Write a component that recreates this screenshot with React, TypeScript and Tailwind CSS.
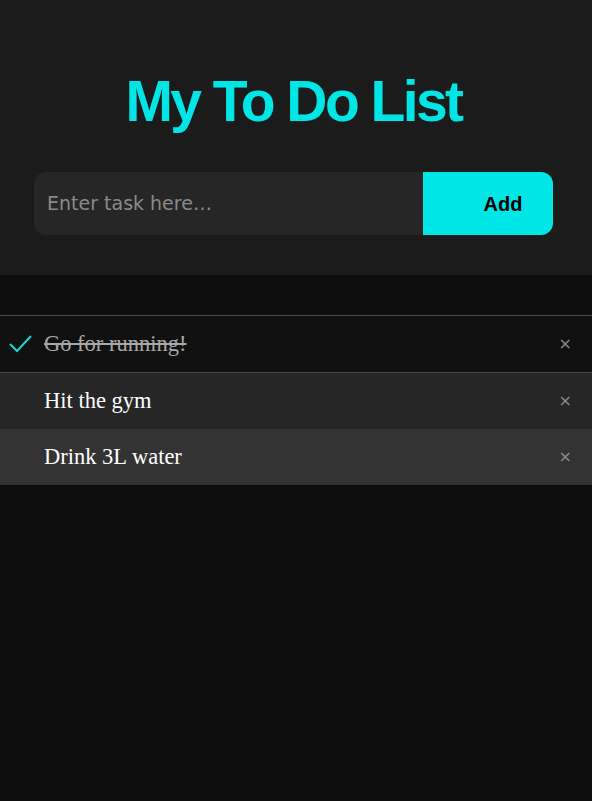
import { useState } from "react";

type Task = { id: number; text: string; done: boolean };

const initialTasks: Task[] = [
  { id: 1, text: "Go for running!", done: true },
  { id: 2, text: "Hit the gym", done: false },
  { id: 3, text: "Drink 3L water", done: false },
];

export default function App() {
  const [tasks, setTasks] = useState<Task[]>(initialTasks);
  const [value, setValue] = useState("");

  const addTask = () => {
    if (!value.trim()) return;
    setTasks([...tasks, { id: Date.now(), text: value.trim(), done: false }]);
    setValue("");
  };

  return (
    <div className="min-h-[801px] bg-[#0e0e0e]">
      {/* Header with title + input */}
      <div className="bg-[#1b1b1b] pl-[34px] pr-[39px] pt-[66px] pb-[40px]">
        <h1 className="text-center font-['Liberation_Sans',Arial,sans-serif] font-bold text-[57px] leading-[70px] tracking-[-0.045em] text-[#00e5e5]">
          My To Do List
        </h1>
        <div className="mt-[36px] flex h-[63px] rounded-xl overflow-hidden bg-[#262626]">
          <input
            value={value}
            onChange={(e) => setValue(e.target.value)}
            placeholder="Enter task here…"
            className="flex-1 min-w-0 bg-transparent px-[13px] font-['DejaVu_Sans',sans-serif] text-[19px] text-white placeholder:text-[#8a8a8a] outline-none"
          />
          <button
            onClick={addTask}
            className="w-[130px] bg-[#00e5e5] pl-[30px] font-['Liberation_Sans',Arial,sans-serif] font-bold text-[20px] text-black"
          >
            Add
          </button>
        </div>
      </div>

      {/* Task list */}
      <ul className="mt-[40px]">
        {tasks.map((t, i) => (
          <li
            key={t.id}
            onClick={() =>
              setTasks(tasks.map((x) => (x.id === t.id ? { ...x, done: !x.done } : x)))
            }
            className={
              "relative flex items-center pl-[44px] pr-[20px] font-['Liberation_Serif','Times_New_Roman',serif] text-[22.5px] " +
              (t.done
                ? "h-[58px] bg-[#111111] border-y border-[#4a4a4a] text-[#a8a8a8]"
                : i % 2 === 1
                ? "h-[56px] bg-[#262626] text-white"
                : "h-[56px] bg-[#333333] text-white")
            }
          >
            {t.done && (
              <svg
                className="absolute left-[9px] top-1/2 -translate-y-1/2"
                width="24"
                height="20"
                viewBox="0 0 24 20"
                fill="none"
                stroke="#1fd3d3"
                strokeWidth="2"
              >
                <path d="M1 10 L8 17 L22 2" />
              </svg>
            )}
            <span className={"flex-1 " + (t.done ? "line-through" : "")}>{t.text}</span>
            <button
              onClick={(e) => {
                e.stopPropagation();
                setTasks(tasks.filter((x) => x.id !== t.id));
              }}
              className="text-[#8a8a8a] font-['DejaVu_Sans',sans-serif] text-[16px] leading-none"
            >
              ×
            </button>
          </li>
        ))}
      </ul>
    </div>
  );
}
